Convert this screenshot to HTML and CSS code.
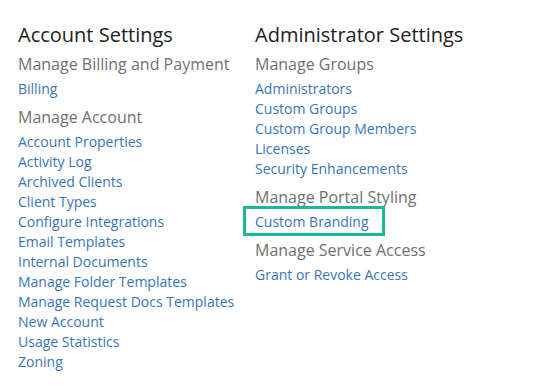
FILE: index.html
```html
<!DOCTYPE html>
<html lang="en">
<head>
    <meta charset="UTF-8">
    <title>Settings</title>
    <link rel="stylesheet" href="styles.css">
</head>
<body>
    <main class="settings">
        <section class="column">
            <h1>Account Settings</h1>
            <h2>Manage Billing and Payment</h2>
            <ul>
                <li><a href="#">Billing</a></li>
            </ul>
            <h2>Manage Account</h2>
            <ul>
                <li><a href="#">Account Properties</a></li>
                <li><a href="#">Activity Log</a></li>
                <li><a href="#">Archived Clients</a></li>
                <li><a href="#">Client Types</a></li>
                <li><a href="#">Configure Integrations</a></li>
                <li><a href="#">Email Templates</a></li>
                <li><a href="#">Internal Documents</a></li>
                <li><a href="#">Manage Folder Templates</a></li>
                <li><a href="#">Manage Request Docs Templates</a></li>
                <li><a href="#">New Account</a></li>
                <li><a href="#">Usage Statistics</a></li>
                <li><a href="#">Zoning</a></li>
            </ul>
        </section>
        <section class="column">
            <h1>Administrator Settings</h1>
            <h2>Manage Groups</h2>
            <ul>
                <li><a href="#">Administrators</a></li>
                <li><a href="#">Custom Groups</a></li>
                <li><a href="#">Custom Group Members</a></li>
                <li><a href="#">Licenses</a></li>
                <li><a href="#">Security Enhancements</a></li>
            </ul>
            <h2>Manage Portal Styling</h2>
            <ul>
                <li class="highlight"><a href="#">Custom Branding</a></li>
            </ul>
            <h2>Manage Service Access</h2>
            <ul>
                <li><a href="#">Grant or Revoke Access</a></li>
            </ul>
        </section>
    </main>
</body>
</html>
```

FILE: styles.css
```css
body {
    margin: 0;
    background: #fff;
    font-family: "Open Sans", Arial, sans-serif;
}

.settings {
    display: flex;
    padding: 20px 0 0 18px;
}

.column {
    width: 237px;
}

h1 {
    margin: 0;
    font-size: 20px;
    font-weight: 400;
    line-height: 30px;
    color: #222;
}

h2 {
    margin: 0;
    padding-bottom: 1px;
    font-size: 16px;
    font-weight: 400;
    line-height: 28px;
    color: #707070;
}

ul {
    list-style: none;
    margin: 0 0 4px;
    padding: 0;
}

li {
    font-size: 14px;
    line-height: 20px;
}

li a {
    color: #3775b9;
    text-decoration: none;
}

/* highlight box drawn over the link, takes no space */
.highlight a {
    position: relative;
    display: inline-block;
}

.highlight a::after {
    content: "";
    position: absolute;
    top: -6px;
    right: -16px;
    bottom: -4px;
    left: -12px;
    border: 3px solid #1db893;
}
```
